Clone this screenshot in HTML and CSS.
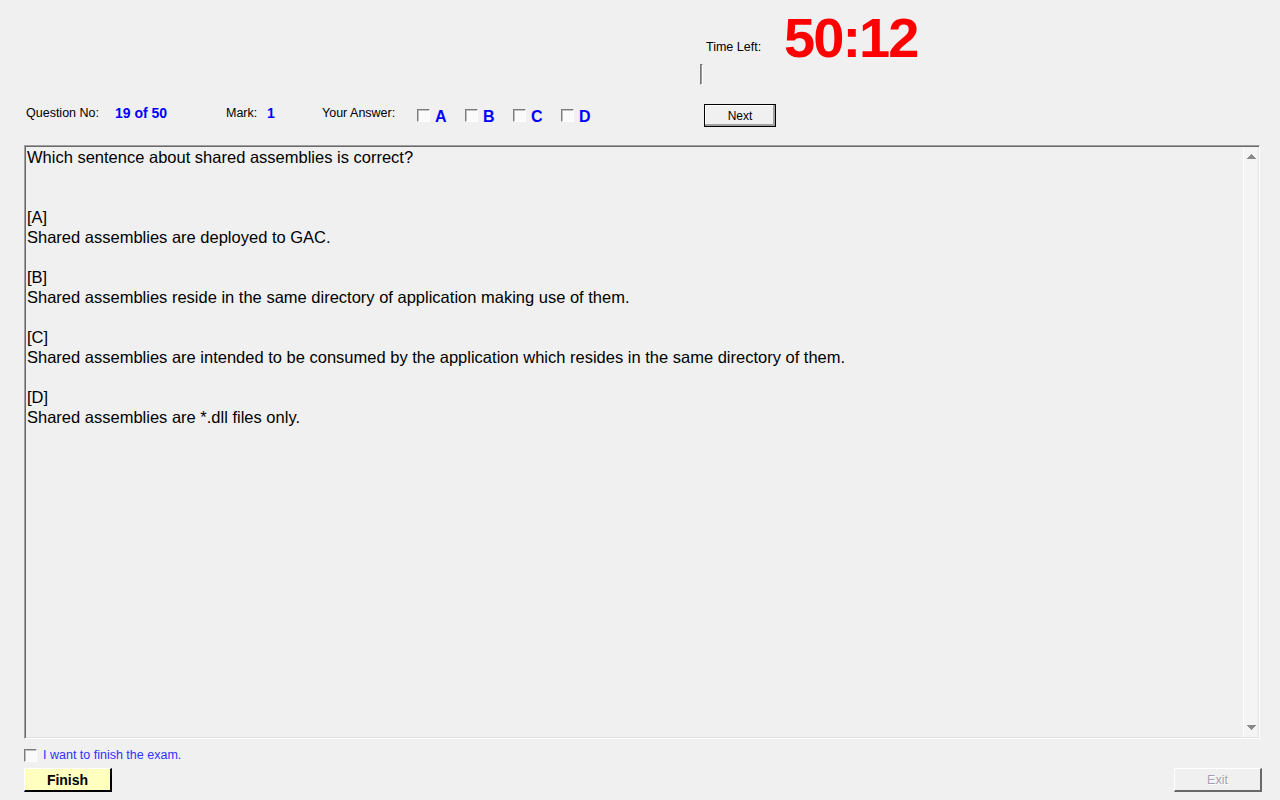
FILE: index.html
```html
<!DOCTYPE html>
<html>
<head>
<meta charset="utf-8">
<title>Exam</title>
<link rel="stylesheet" href="styles.css">
</head>
<body>
<div class="app">
  <div class="timer-row">
    <span class="time-label">Time Left:</span>
    <span class="time-value">50:12</span>
  </div>
  <div class="bar-row"><span class="mini-bar"></span></div>
  <div class="q-row">
    <span class="cell c-qlabel lbl">Question No:</span>
    <span class="cell c-qval val">19 of 50</span>
    <span class="cell c-mlabel lbl">Mark:</span>
    <span class="cell c-mval val">1</span>
    <span class="cell c-alabel lbl">Your Answer:</span>
    <span class="opt"><span class="cb"></span><span class="opt-letter">A</span></span>
    <span class="opt"><span class="cb"></span><span class="opt-letter">B</span></span>
    <span class="opt"><span class="cb"></span><span class="opt-letter">C</span></span>
    <span class="opt"><span class="cb"></span><span class="opt-letter">D</span></span>
    <button class="btn-next">Next</button>
  </div>
  <div class="qbox">
    <div class="qtext">
      <div class="line">Which sentence about shared assemblies is correct?</div>
      <div class="line">&nbsp;</div>
      <div class="line">&nbsp;</div>
      <div class="line">[A]</div>
      <div class="line">Shared assemblies are deployed to GAC.</div>
      <div class="line">&nbsp;</div>
      <div class="line">[B]</div>
      <div class="line">Shared assemblies reside in the same directory of application making use of them.</div>
      <div class="line">&nbsp;</div>
      <div class="line">[C]</div>
      <div class="line">Shared assemblies are intended to be consumed by the application which resides in the same directory of them.</div>
      <div class="line">&nbsp;</div>
      <div class="line">[D]</div>
      <div class="line">Shared assemblies are *.dll files only.</div>
    </div>
    <div class="scrollbar">
      <svg class="arrow" width="9" height="5" viewBox="0 0 9 5"><path d="M4 0h1v1h1v1h1v1h1v1h1v1H0V4h1V3h1V2h1V1h1z" fill="#8a8a8a"/></svg>
      <svg class="arrow" width="9" height="5" viewBox="0 0 9 5"><path d="M0 0h9v1H8v1H7v1H6v1H5v1H4V4H3V3H2V2H1V1H0z" fill="#8a8a8a"/></svg>
    </div>
  </div>
  <div class="finish-row">
    <span class="cb"></span>
    <span class="finish-label">I want to finish the exam.</span>
  </div>
  <div class="btn-row">
    <button class="btn-finish">Finish</button>
    <button class="btn-exit" disabled>Exit</button>
  </div>
</div>
</body>
</html>
```
FILE: styles.css
```css
html, body {
  margin: 0;
  padding: 0;
  background: #f0f0f0;
}
body {
  font-family: "Liberation Sans", Arial, sans-serif;
  color: #000;
  width: 1280px;
  height: 800px;
  overflow: hidden;
}
.app {
  display: flex;
  flex-direction: column;
}
.timer-row {
  display: flex;
  align-items: flex-start;
  padding: 10px 0 0 706px;
  height: 64px;
  box-sizing: border-box;
}
.time-label {
  font-size: 12.5px;
  line-height: 15px;
  margin-top: 30px;
}
.time-value {
  font-size: 56px;
  line-height: 56px;
  font-weight: bold;
  color: #ff0000;
  margin-left: 23px;
  letter-spacing: -2px;
}
.bar-row {
  display: flex;
  padding-left: 700px;
  height: 40px;
}
.mini-bar {
  width: 3px;
  height: 21px;
  border-left: 1px solid #7a7a7a;
  border-top: 1px solid #7a7a7a;
  border-right: 1px solid #ffffff;
  border-bottom: 1px solid #ffffff;
  background: #9a9a9a;
  box-sizing: border-box;
}
.q-row {
  display: flex;
  align-items: flex-start;
  padding-left: 26px;
  height: 22px;
}
.cell {
  flex: none;
}
.lbl {
  font-size: 12.5px;
  line-height: 15px;
  margin-top: 2px;
}
.val {
  font-size: 14px;
  line-height: 16px;
  font-weight: bold;
  color: #0000ff;
  margin-top: 1px;
}
.c-qlabel { width: 89px; }
.c-qval { width: 111px; }
.c-mlabel { width: 41px; }
.c-mval { width: 55px; }
.c-alabel { width: 95px; }
.opt {
  width: 48px;
  flex: none;
  display: flex;
  align-items: flex-start;
  margin-top: 5px;
}
.cb {
  display: inline-block;
  width: 13px;
  height: 13px;
  box-sizing: border-box;
  border-top: 1px solid #7c7c7c;
  border-left: 1px solid #7c7c7c;
  border-right: 1px solid #ffffff;
  border-bottom: 1px solid #ffffff;
  box-shadow: inset 1px 1px 0 #c0c0c0;
  background: #fafafa;
  flex: none;
}
.opt-letter {
  margin-left: 5px;
  font-size: 16px;
  line-height: 16px;
  font-weight: bold;
  color: #0000ff;
}
.btn-next {
  margin-left: 95px;
  width: 72px;
  height: 23px;
  padding: 0;
  font-family: "Liberation Sans", Arial, sans-serif;
  font-size: 12px;
  color: #000;
  background: #f0f0f0;
  border: 1px solid #000;
  box-shadow: inset -2px -2px 0 #a0a0a0, inset 1px 1px 0 #ffffff;
  flex: none;
}
.qbox {
  margin: 19px 0 0 24px;
  width: 1236px;
  height: 594px;
  box-sizing: border-box;
  border-top: 1px solid #a0a0a0;
  border-left: 1px solid #a0a0a0;
  border-right: 1px solid #ffffff;
  border-bottom: 1px solid #ffffff;
  box-shadow: inset 1px 1px 0 #696969, inset -1px -1px 0 #e3e3e3;
  display: flex;
}
.qtext {
  flex: 1;
  padding: 1px 0 0 2px;
  font-size: 16.5px;
  line-height: 20px;
}
.line {
  white-space: nowrap;
  height: 20px;
}
.scrollbar {
  width: 14px;
  margin: 1px 1px 1px 0;
  background: #f4f4f4;
  border-left: 1px solid #ffffff;
  display: flex;
  flex-direction: column;
  justify-content: space-between;
  align-items: center;
  padding: 7px 0 7px;
}
.arrow {
  display: block;
}
.finish-row {
  display: flex;
  align-items: center;
  padding-left: 24px;
  margin-top: 10px;
  height: 13px;
}
.finish-label {
  margin-left: 6px;
  font-size: 12.5px;
  line-height: 15px;
  color: #3030ff;
}
.btn-row {
  display: flex;
  justify-content: space-between;
  padding: 0 19px 0 24px;
  margin-top: 6px;
}
.btn-finish, .btn-exit {
  width: 88px;
  height: 24px;
  padding: 0;
  font-family: "Liberation Sans", Arial, sans-serif;
  box-sizing: border-box;
}
.btn-finish {
  background: #ffffc0;
  font-size: 14px;
  font-weight: bold;
  color: #000;
  border-top: 1px solid #ffffff;
  border-left: 1px solid #ffffff;
  border-right: 2px solid #000000;
  border-bottom: 2px solid #000000;
}
.btn-exit {
  margin-right: -1px;
  background: #f0f0f0;
  font-size: 12.5px;
  color: #a8a0b0;
  text-shadow: 1px 1px 0 #ffffff;
  border-top: 1px solid #ffffff;
  border-left: 1px solid #ffffff;
  border-right: 2px solid #696969;
  border-bottom: 2px solid #696969;
}
```
